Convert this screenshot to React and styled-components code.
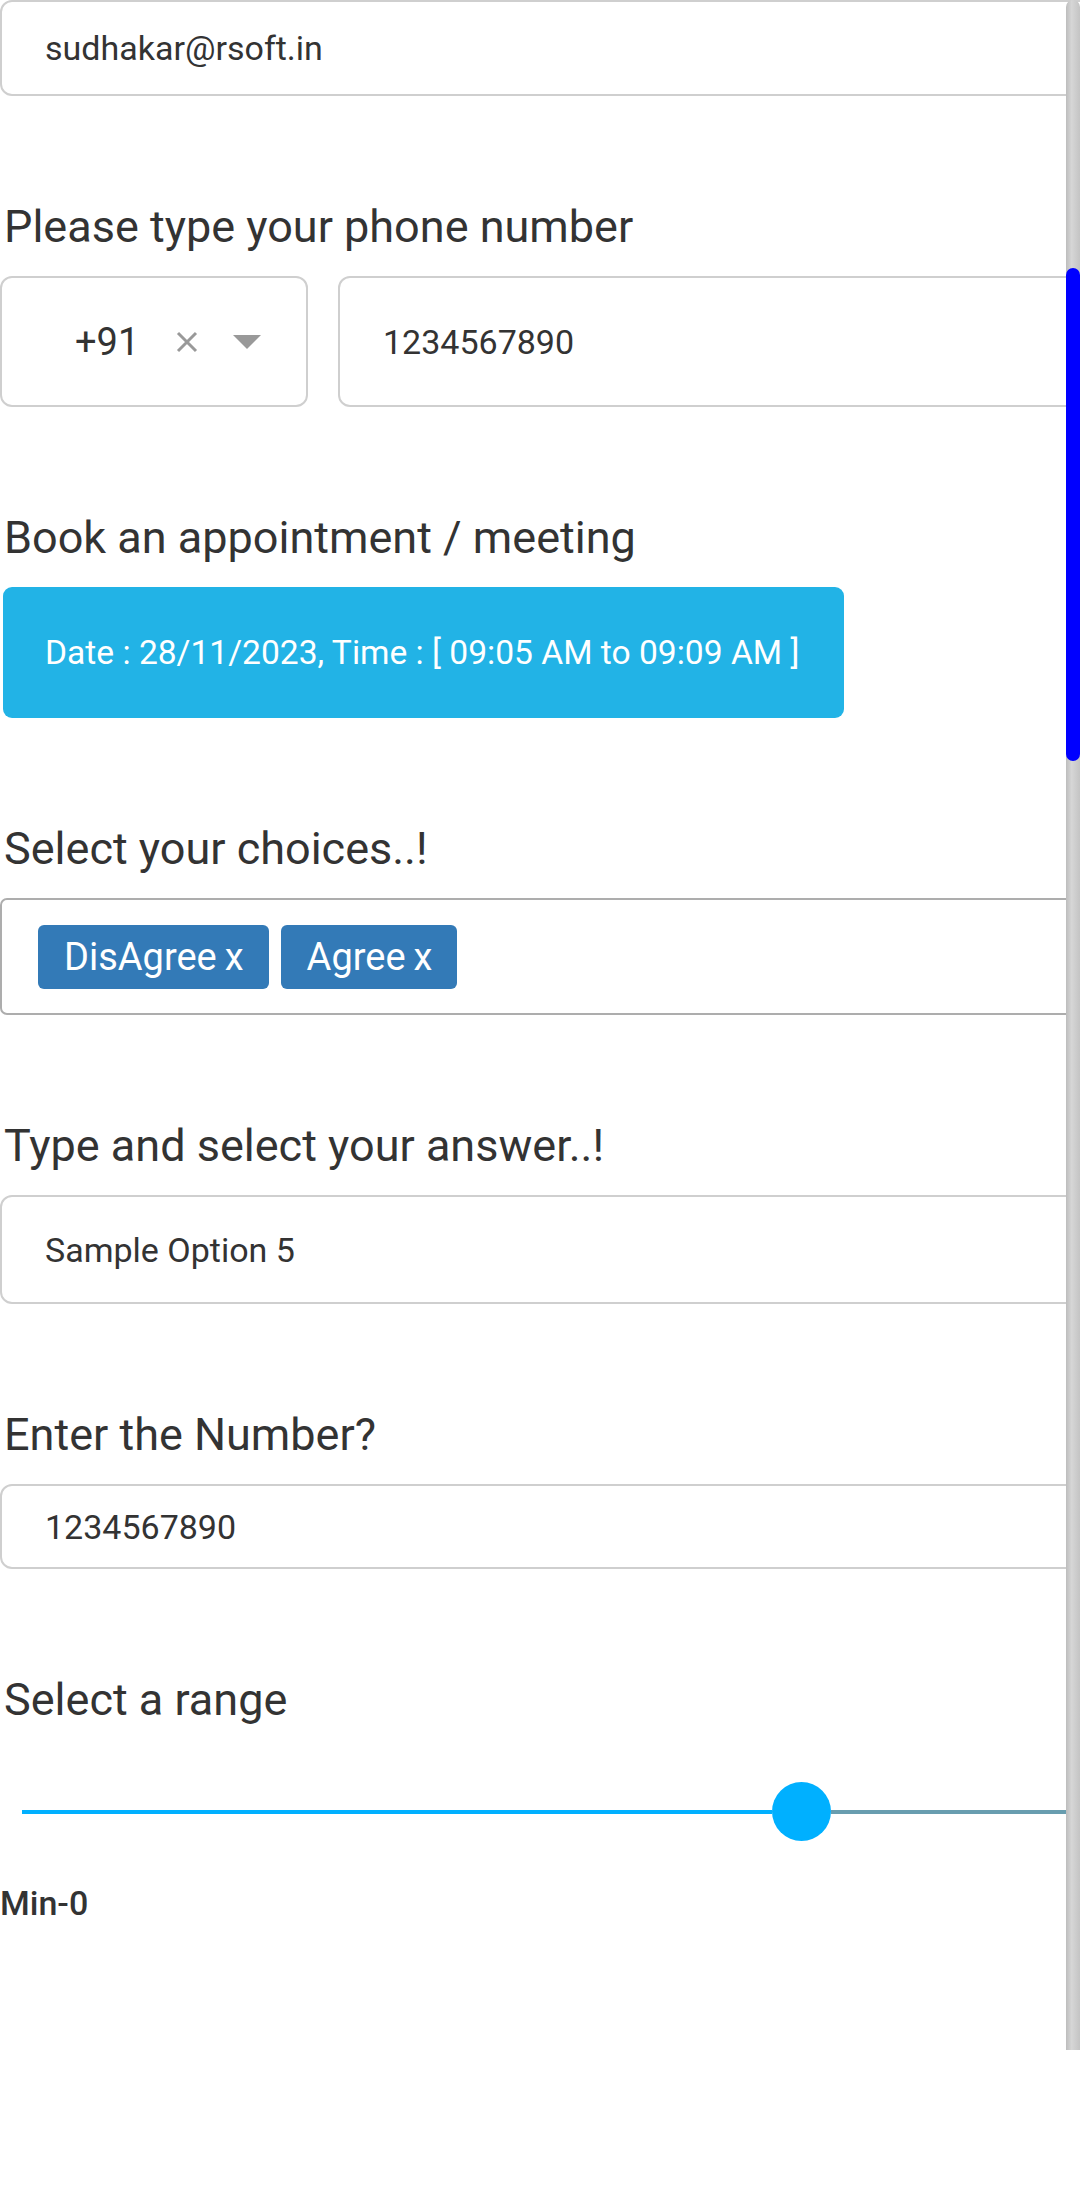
import React from 'react';
import styled, { createGlobalStyle } from 'styled-components';

const GlobalStyle = createGlobalStyle`
  html, body {
    margin: 0;
    padding: 0;
    background: #fff;
  }
  body {
    font-family: Roboto, "Noto Sans", "Liberation Sans", sans-serif;
    color: #333;
  }
`;

const Viewport = styled.div`
  position: relative;
  width: 1080px;
  height: 2050px;
  overflow: hidden;
`;

const Form = styled.div`
  width: 1100px;
  display: flex;
  flex-direction: column;
`;

const Field = styled.div`
  display: flex;
  flex-direction: column;
  margin-bottom: ${props => props.spacing ?? 107}px;
`;

const Label = styled.div`
  font-size: 45px;
  line-height: 48px;
  height: 48px;
  padding-left: 4px;
  margin-bottom: 25px;
  color: #333;
  white-space: nowrap;
`;

const TextBox = styled.div`
  box-sizing: border-box;
  height: ${props => props.height}px;
  border: 2px solid #cfcfcf;
  border-radius: 12px;
  padding-left: 43px;
  display: flex;
  align-items: center;
  font-size: 34px;
  color: #333;
  background: #fff;
`;

const PhoneRow = styled.div`
  display: flex;
  gap: 30px;
`;

const CountryBox = styled.div`
  box-sizing: border-box;
  width: 308px;
  height: 131px;
  border: 2px solid #cfcfcf;
  border-radius: 12px;
  display: flex;
  align-items: center;
  padding-left: 73px;
`;

const CountryCode = styled.span`
  font-size: 38px;
  color: #333;
  margin-right: 37px;
`;

const ClearIcon = styled.svg`
  width: 22px;
  height: 22px;
  margin-right: 35px;
`;

const Caret = styled.span`
  width: 0;
  height: 0;
  border-left: 14px solid transparent;
  border-right: 14px solid transparent;
  border-top: 14px solid #999;
`;

const PhoneBox = styled(TextBox)`
  flex: 1;
  height: 131px;
`;

const BookButton = styled.div`
  box-sizing: border-box;
  width: 841px;
  height: 131px;
  margin-left: 3px;
  border-radius: 9px;
  background: #22b3e6;
  color: #fff;
  font-size: 33.6px;
  display: flex;
  align-items: center;
  padding-left: 42px;
  white-space: nowrap;
`;

const MultiBox = styled.div`
  box-sizing: border-box;
  height: 117px;
  border: 2px solid #adadad;
  border-radius: 7px;
  display: flex;
  align-items: center;
  gap: 12px;
  padding-left: 36px;
`;

const Chip = styled.span`
  box-sizing: border-box;
  height: 64px;
  border-radius: 6px;
  background: #337ab7;
  color: #fff;
  font-size: 38px;
  display: flex;
  align-items: center;
  padding: 0 25px 0 26px;
  white-space: nowrap;
`;

const ChipRemove = styled.span`
  margin-left: 8px;
`;

const SliderRow = styled.div`
  display: flex;
  align-items: center;
  height: 59px;
  padding-left: 22px;
  margin-top: 33px;
`;

const SliderFill = styled.div`
  height: 4px;
  background: #00b0ff;
  width: ${props => props.width}px;
`;

const SliderThumb = styled.div`
  width: 59px;
  height: 59px;
  border-radius: 50%;
  background: #00b0ff;
  flex: none;
`;

const SliderRest = styled.div`
  flex: 1;
  height: 4px;
  background: #689daf;
`;

const RangeMin = styled.div`
  font-size: 34px;
  font-weight: 500;
  color: #333;
  margin-top: 42px;
`;

const ScrollTrack = styled.div`
  position: absolute;
  top: 0;
  right: 0;
  width: 14px;
  height: 2050px;
  border-radius: 7px 7px 0 0;
  background: linear-gradient(to right, #bdbdbd, #d6d6d6 40%, #c4c4c4);
`;

const ScrollThumb = styled.div`
  position: absolute;
  top: 268px;
  left: 0;
  width: 14px;
  height: 493px;
  border-radius: 7px;
  background: #0000ff;
`;

const choices = ['DisAgree', 'Agree'];

const App = () => {
  return (
    <>
      <GlobalStyle />
      <Viewport>
        <Form>
          <Field>
            <TextBox height={96}>sudhakar@rsoft.in</TextBox>
          </Field>

          <Field>
            <Label>Please type your phone number</Label>
            <PhoneRow>
              <CountryBox>
                <CountryCode>+91</CountryCode>
                <ClearIcon viewBox="0 0 22 22">
                  <path d="M2 2 L20 20 M20 2 L2 20" stroke="#999" strokeWidth="3" />
                </ClearIcon>
                <Caret />
              </CountryBox>
              <PhoneBox>1234567890</PhoneBox>
            </PhoneRow>
          </Field>

          <Field>
            <Label>Book an appointment / meeting</Label>
            <BookButton>Date : 28/11/2023, Time : [ 09:05 AM to 09:09 AM ]</BookButton>
          </Field>

          <Field>
            <Label>Select your choices..!</Label>
            <MultiBox>
              {choices.map(choice => (
                <Chip key={choice}>
                  {choice}
                  <ChipRemove>x</ChipRemove>
                </Chip>
              ))}
            </MultiBox>
          </Field>

          <Field>
            <Label>Type and select your answer..!</Label>
            <TextBox height={109}>Sample Option 5</TextBox>
          </Field>

          <Field>
            <Label>Enter the Number?</Label>
            <TextBox height={85}>1234567890</TextBox>
          </Field>

          <Field spacing={0}>
            <Label>Select a range</Label>
            <SliderRow>
              <SliderFill width={750} />
              <SliderThumb />
              <SliderRest />
            </SliderRow>
            <RangeMin>Min-0</RangeMin>
          </Field>
        </Form>
        <ScrollTrack>
          <ScrollThumb />
        </ScrollTrack>
      </Viewport>
    </>
  );
};

export default App;
